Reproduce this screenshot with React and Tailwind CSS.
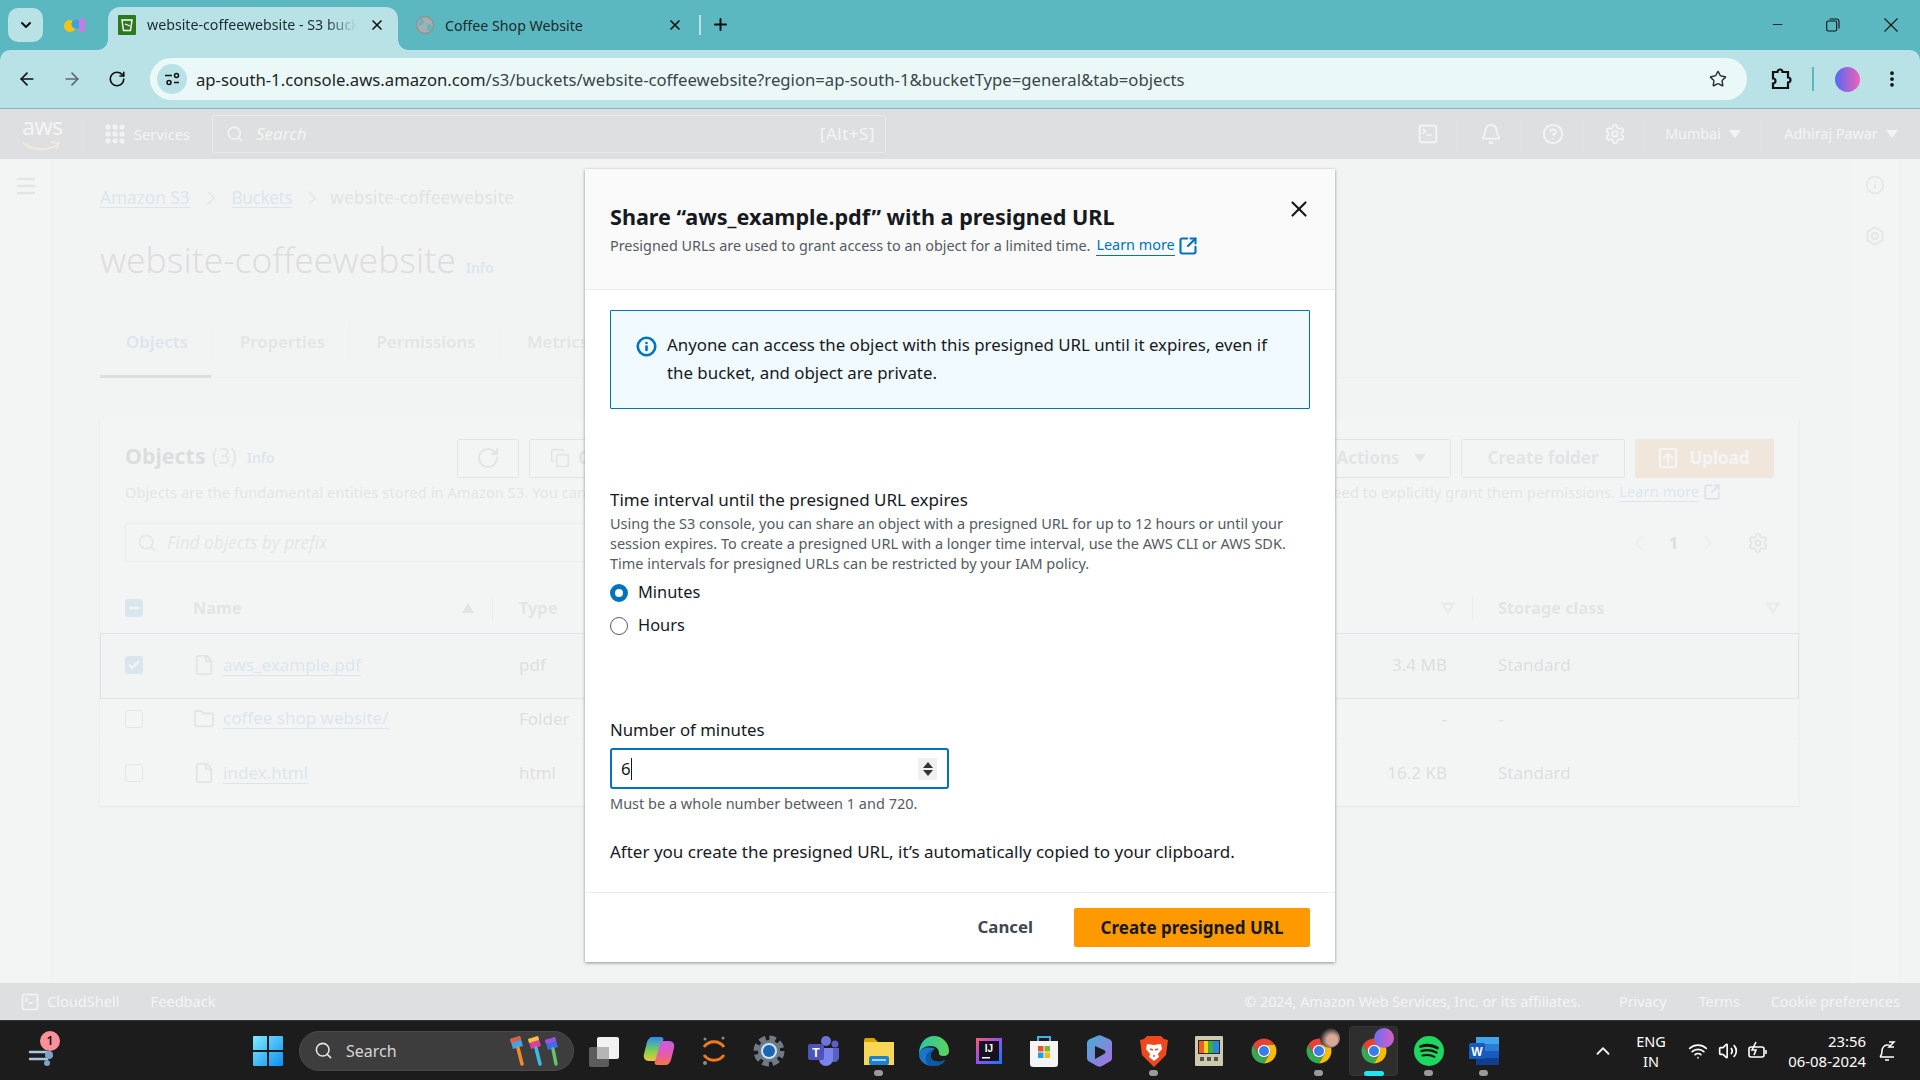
import {
  ArrowLeft, ArrowRight, RotateCw, Star, X, Plus, ChevronDown, ChevronUp, Minus, EllipsisVertical, Search,
  Grip, SquareTerminal, Bell, CircleHelp, Settings, Info, SquareArrowOutUpRight, File, Folder,
  Copy, ChevronLeft, ChevronRight, Menu, Check, Wifi, Volume2,
} from 'lucide-react';

function Caret({ className = 'text-white' }) {
  return <span className={`inline-block w-0 h-0 border-x-[6px] border-x-transparent border-t-[8px] border-t-current ${className}`} />;
}

function FilterCaret() {
  return (
    <svg width="14" height="12" viewBox="0 0 14 12" className="text-[#879596]">
      <path d="M1.5 1.5h11L7 10.5z" fill="none" stroke="currentColor" strokeWidth="2" />
    </svg>
  );
}

function ChromeLogo({ size = 30 }) {
  return (
    <svg width={size} height={size} viewBox="0 0 48 48">
      <path d="M41.32 14H24a10 10 0 0 0-8.66 15L6.68 14a20 20 0 0 1 34.64 0z" fill="#e94235" />
      <path d="M6.68 14l8.66 15a10 10 0 0 0 17.32 0L24 44A20 20 0 0 1 6.68 14z" fill="#34a853" />
      <path d="M24 14h17.32A20 20 0 0 1 24 44l8.66-15A10 10 0 0 0 24 14z" fill="#fbbc04" />
      <circle cx="24" cy="24" r="10" fill="#fff" />
      <circle cx="24" cy="24" r="8" fill="#3a7cec" />
    </svg>
  );
}

function TabStrip() {
  return (
    <div className="h-[50px] flex items-end relative shrink-0">
      <div className="absolute left-[8px] top-[8px] w-[35px] h-[34px] rounded-[10px] bg-[#b8e2e5] flex items-center justify-center">
        <ChevronDown size={16} strokeWidth={3} className="text-[#111]" />
      </div>
      <svg width="22" height="18" viewBox="0 0 22 18" className="absolute left-[64px] top-[16px]">
        <circle cx="6" cy="10" r="6" fill="#f2c417" />
        <circle cx="12" cy="8" r="4.5" fill="#38a4dc" />
        <rect x="15" y="2" width="6" height="14" rx="2" fill="#c77ae8" />
      </svg>
      {/* active tab */}
      <div className="absolute left-[108px] top-[7px] w-[290px] h-[43px] bg-[#b8e2e5] rounded-t-[12px] flex items-center pl-[10px] pb-[7px]">
        <span className="absolute left-[-10px] bottom-0 w-[10px] h-[10px] bg-[radial-gradient(circle_at_0_0,transparent_9.5px,#b8e2e5_10px)]" />
        <span className="absolute right-[-10px] bottom-0 w-[10px] h-[10px] bg-[radial-gradient(circle_at_100%_0,transparent_9.5px,#b8e2e5_10px)]" />
        <svg width="18" height="20" viewBox="0 0 18 20">
          <rect width="18" height="20" rx="1" fill="#2c7a1f" />
          <path d="M4 5h10l-1.5 10.5h-7z" fill="none" stroke="#fff" strokeWidth="1.4" />
          <path d="M7 9l5 2" stroke="#fff" strokeWidth="1.2" />
        </svg>
        <span className="ml-[11px] w-[210px] overflow-hidden whitespace-nowrap text-[14.2px] text-[#1c2b2d] [mask-image:linear-gradient(to_right,black_85%,transparent)]">website-coffeewebsite - S3 bucket</span>
        <X size={16} strokeWidth={2.5} className="ml-[12px] text-[#111]" />
      </div>
      {/* inactive tab */}
      <svg width="20" height="20" viewBox="0 0 20 20" className="absolute left-[415px] top-[15px]">
        <circle cx="10" cy="10" r="8.5" fill="#a8adb0" stroke="#8d9396" strokeWidth="1.5" />
        <path d="M6 3c3 2 4 4 2 6s-4 1-5 3M13 9c2 0 4 1 4 3-1 3-4 4-5 4 0-3 0-5 1-7z" fill="#5bb8c1" />
      </svg>
      <span className="absolute left-[445px] top-[15px] text-[14.2px] text-[#1c2b2d]">Coffee Shop Website</span>
      <X size={16} strokeWidth={2.5} className="absolute left-[667px] top-[17px] text-[#111]" />
      <div className="absolute left-[699px] top-[15px] w-[2px] h-[20px] bg-[#b8e2e5]" />
      <Plus size={19} strokeWidth={2.5} className="absolute left-[711px] top-[15px] text-[#111]" />
      {/* window controls */}
      <Minus size={15} strokeWidth={1.3} className="absolute left-[1770px] top-[17px] text-[#111]" />
      <svg width="14" height="14" viewBox="0 0 14 14" className="absolute left-[1826px] top-[18px]" fill="none" stroke="#111" strokeWidth="1.1">
        <rect x="0.7" y="3" width="10" height="10" rx="1.6" />
        <path d="M3.5 1h7a2.5 2.5 0 0 1 2.5 2.5v7" />
      </svg>
      <svg width="14" height="14" viewBox="0 0 14 14" className="absolute left-[1884px] top-[18px]" stroke="#111" strokeWidth="1.1">
        <path d="M0.5 0.5l13 13M13.5 0.5l-13 13" />
      </svg>
    </div>
  );
}

function Toolbar() {
  return (
    <div className="h-[59px] bg-[#b8e2e5] rounded-t-[10px] border-b border-[#88b4b8] flex items-center shrink-0 relative">
      <div className="w-[150px] flex items-center pl-[17px] gap-[25px]">
        <ArrowLeft size={20} strokeWidth={2} className="text-[#111]" />
        <ArrowRight size={20} strokeWidth={2} className="text-[#5c6b6e]" />
        <RotateCw size={18} strokeWidth={2.2} className="ml-[1px] text-[#111]" />
      </div>
      <div className="w-[1597px] h-[42px] rounded-full bg-[#ebf8f8] flex items-center pl-[7px] relative">
        <div className="w-[30px] h-[30px] rounded-full bg-[#b8e2e5] flex items-center justify-center">
          <svg width="16" height="16" viewBox="0 0 16 16" fill="none" stroke="#111" strokeWidth="1.5">
            <path d="M1 4.5h7M10 11.500h5" />
            <circle cx="12.500" cy="4.500" r="2" />
            <circle cx="5" cy="11.500" r="2" />
          </svg>
        </div>
        <span className="ml-[9px] mt-[1px] text-[16.7px] text-[#1c2526] whitespace-nowrap">ap-south-1.console.aws.amazon.com<span className="text-[#38474a]">/s3/buckets/website-coffeewebsite?region=ap-south-1&amp;bucketType=general&amp;tab=objects</span></span>
        <Star size={18} strokeWidth={2} className="absolute right-[20px] text-[#2d3436]" />
      </div>
      <svg width="22" height="24" viewBox="0 0 22 24" fill="none" stroke="#111" strokeWidth="2.2" className="ml-[23px]">
        <path d="M3 5h4.5a2.5 2.5 0 0 1 5 0H18v5.5a2.5 2.5 0 0 1 0 5V21H3v-4.5a2.5 2.5 0 0 0 0-5z" />
      </svg>
      <div className="w-[2px] h-[24px] bg-[#5bb8c1] ml-[20px]" />
      <div className="w-[25px] h-[25px] rounded-full ml-[21px] bg-[linear-gradient(to_right,#4f6bf0,#f560b8)]" />
      <EllipsisVertical size={20} strokeWidth={2.5} className="ml-[22px] text-[#111]" />
    </div>
  );
}

function NavCell({ w, children, last }) {
  return <div className={`h-[36px] flex items-center justify-center gap-[8px] ${w} ${last ? '' : 'border-r border-[#414750]'}`}>{children}</div>;
}

function TopNav() {
  return (
    <div className="h-[50px] bg-[#232f3e] flex items-center text-white shrink-0">
      <div className="w-[83px] h-[36px] border-r border-[#414750] pl-[22px] relative">
        <span className="absolute left-[22px] top-[-4px] text-[23px] leading-[28px] tracking-[-0.5px]">aws</span>
        <svg width="40" height="12" viewBox="0 0 40 12" className="absolute left-[21px] top-[25px]">
          <path d="M2 2c10 8 24 8 34 2" fill="none" stroke="#f90" strokeWidth="2" />
          <path d="M30 1l8 1-3 6" fill="none" stroke="#f90" strokeWidth="2" />
        </svg>
      </div>
      <Grip size={24} strokeWidth={3} className="ml-[20px]" />
      <span className="ml-[7px] w-[78px] text-[14.7px]">Services</span>
      <div className="w-[674px] h-[38px] border border-[#879596] rounded-[2px] bg-[#232f3e] flex items-center pl-[13px] pr-[10px]">
        <Search size={18} strokeWidth={2} />
        <span className="ml-[12px] italic text-[17px] flex-1">Search</span>
        <span className="text-[17px] tracking-[0.5px]">[Alt+S]</span>
      </div>
      <div className="flex-1" />
      <NavCell w="w-[62px]"><SquareTerminal size={22} strokeWidth={2} className="ml-[2px]" /></NavCell>
      <NavCell w="w-[64px]"><Bell size={22} strokeWidth={2} className="ml-[2px]" /></NavCell>
      <NavCell w="w-[61px]"><CircleHelp size={22} strokeWidth={2} className="ml-[2px]" /></NavCell>
      <NavCell w="w-[62px]"><Settings size={22} strokeWidth={2} className="ml-[2px]" /></NavCell>
      <NavCell w="w-[117px]"><span className="text-[14.3px]">Mumbai</span><Caret /></NavCell>
      <NavCell w="w-[158px]" last><span className="text-[14.3px]">Adhiraj Pawar</span><Caret /></NavCell>
    </div>
  );
}

function Breadcrumb() {
  return (
    <div className="h-[22px] flex items-center text-[17.200px] leading-[22px] mt-[1px]">
      <a className="text-[#0073bb] border-b border-[#0073bb] leading-[19px]">Amazon S3</a>
      <ChevronRight size={24} strokeWidth={1.5} className="mx-[9px] text-[#687078]" />
      <a className="text-[#0073bb] border-b border-[#0073bb] leading-[19px] tracking-[-0.4px]">Buckets</a>
      <ChevronRight size={24} strokeWidth={1.5} className="ml-[8px] mr-[6px] text-[#687078]" />
      <span className="text-[#545b64] font-medium">website-coffeewebsite</span>
    </div>
  );
}

function Tabs() {
  const items = [['Properties', 'w-[137px]'], ['Permissions', 'w-[150px]']];
  return (
    <div className="mt-[37px] h-[60px] border-b border-[#d5dbdb] flex items-start pt-[4px] relative">
      <div className="w-[113px] h-[40px] pl-[2px] border-r border-[#d5dbdb] flex items-center justify-center text-[16.800px] font-semibold text-[#0073bb]">Objects</div>
      <span className="absolute left-0 bottom-[-1px] w-[111px] h-[3px] bg-[#16191f]" />
      {items.map(([t, w]) => (
        <div key={t} className={`h-[40px] pl-[3px] border-r border-[#d5dbdb] flex items-center justify-center text-[16.800px] font-semibold text-[#545b64] ${w}`}>{t}</div>
      ))}
      <div className="h-[40px] pl-[27px] pr-[26px] border-r border-[#d5dbdb] flex items-center text-[16.800px] font-semibold text-[#545b64]">Metrics</div>
    </div>
  );
}

function SquareBtn({ children, className = '' }) {
  return <div className={`h-[39px] border border-[#545b64] rounded-[2px] flex items-center justify-center font-bold text-[17px] leading-[22px] pb-[2px] text-[#545b64] ${className}`}>{children}</div>;
}

function Check18({ state }) {
  if (state === 'checked') return <div className="w-[18px] h-[18px] rounded-[3px] bg-[#0073bb] flex items-center justify-center"><Check size={14} strokeWidth={3.5} className="text-white" /></div>;
  if (state === 'mixed') return <div className="w-[18px] h-[18px] rounded-[3px] bg-[#0073bb] flex items-center justify-center"><Minus size={14} strokeWidth={4} className="text-white" /></div>;
  return <div className="w-[18px] h-[18px] rounded-[3px] border border-[#687078]" />;
}

function ObjectRow({ state, icon, name, type, size, storage, className }) {
  const RowIcon = icon;
  return (
    <div className={`grid grid-cols-[93px_326px_1fr_301px] items-center text-[17px] text-[#16191f] ${className}`}>
      <div className="pl-[25px]"><Check18 state={state} /></div>
      <div className="flex items-center gap-[8px]">
        <RowIcon size={22} strokeWidth={2} className="text-[#545b64]" />
        <a className="text-[#0073bb] border-b border-[#0073bb] leading-[20px]">{name}</a>
      </div>
      <div className="flex justify-between pr-[51px]">
        <span>{type}</span>
        <span>{size}</span>
      </div>
      <div>{storage}</div>
    </div>
  );
}

function ObjectsCard() {
  return (
    <div className="mt-[42px] h-[386px] bg-white shadow-[0_1px_1px_0_rgba(0,28,36,0.3),1px_1px_1px_0_rgba(0,28,36,0.15),-1px_1px_1px_0_rgba(0,28,36,0.15)]">
      <div className="pt-[19px] px-[25px] flex h-[58px]">
        <div className="w-[332px] flex items-center pb-[5px]">
          <span className="text-[21.400px] font-bold text-[#16191f]">Objects</span>
          <span className="ml-[6px] text-[21.400px] text-[#687078]">(3)</span>
          <span className="ml-[10px] mt-[3px] text-[14px] font-semibold text-[#0073bb]">Info</span>
        </div>
        <SquareBtn className="w-[62px]"><RotateCw size={24} strokeWidth={2} /></SquareBtn>
        <SquareBtn className="w-[200px] ml-[10px] justify-start pl-[20px] gap-[8px]"><Copy size={20} strokeWidth={2} />Copy S3 URI</SquareBtn>
        <div className="flex-1" />
        <SquareBtn className="w-[150px] gap-[14px] pl-[10px]">Actions <Caret className="text-[#545b64]" /></SquareBtn>
        <SquareBtn className="w-[164px] ml-[10px] border-[#545b64]">Create folder</SquareBtn>
        <div className="w-[139px] h-[39px] ml-[10px] rounded-[2px] bg-[#ec7211] flex items-center justify-center gap-[12px] font-bold text-[17px] leading-[22px] pb-[2px] text-white">
          <svg width="18" height="20" viewBox="0 0 18 20" fill="none" stroke="#fff" strokeWidth="2"><rect x="1" y="1" width="16" height="18" /><path d="M9 17V6M4.5 10.5L9 6l4.5 4.5" /></svg>
          Upload
        </div>
      </div>
      <p className="mt-[3px] px-[25px] text-[14.500px] tracking-[0.13px] leading-[20px] text-[#545b64] whitespace-nowrap flex items-center">
        Objects are the fundamental entities stored in Amazon S3. You can use Amazon S3 inventory to get a list of all objects in your bucket. For others to access your objects, you'll need to explicitly grant them permissions.
        <a className="ml-[4px] text-[#0073bb] border-b border-[#0073bb]">Learn more</a>
        <SquareArrowOutUpRight size={18} strokeWidth={2.5} className="ml-[4px] text-[#0073bb]" />
      </p>
      <div className="mt-[21px] px-[25px] flex items-center">
        <div className="w-[700px] h-[39px] border border-[#aab7b8] rounded-[2px] flex items-center pl-[11px] italic text-[17.200px] text-[#687078] gap-[10px]">
          <Search size={20} strokeWidth={2} className="text-[#687078]" />Find objects by prefix
        </div>
        <div className="flex-1" />
        <ChevronLeft size={26} strokeWidth={1.6} className="text-[#aab7b8]" />
        <span className="ml-[17px] w-[9px] font-bold text-[16px] text-[#16191f]">1</span>
        <ChevronRight size={26} strokeWidth={1.6} className="ml-[17px] text-[#aab7b8]" />
        <Settings size={22} strokeWidth={2} className="ml-[26px] mr-[5px] text-[#545b64]" />
      </div>
      <div className="mt-[22px] h-[48px] grid grid-cols-[93px_326px_1fr_301px] items-center font-bold text-[16.300px] text-[#545b64]">
        <div className="pl-[25px]"><Check18 state="mixed" /></div>
        <div className="flex items-center justify-between pr-[26px]">
          Name
          <span className="flex items-center gap-[18px]">
            <span className="w-0 h-0 border-x-[6px] border-x-transparent border-b-[10px] border-b-[#545b64]" />
            <span className="w-px h-[25px] bg-[#aab7b8]" />
          </span>
        </div>
        <div className="flex items-center justify-between pr-[25px]">
          Type
          <span className="flex items-center gap-[17px]"><FilterCaret /><span className="w-px h-[25px] bg-[#aab7b8]" /></span>
        </div>
        <div className="flex items-center justify-between pr-[19px]">Storage class<FilterCaret /></div>
      </div>
      <ObjectRow className="h-[66px] mt-[1px] pb-[2px] bg-[#f1faff] outline outline-[#0073bb] -outline-offset-1" state="checked" icon={File} name="aws_example.pdf" type="pdf" size="3.4 MB" storage="Standard" />
      <ObjectRow className="h-[40px] border-b border-[#eaeded]" icon={Folder} name="coffee shop website/" type="Folder" size="-" storage="-" />
      <ObjectRow className="h-[68px]" icon={File} name="index.html" type="html" size="16.2 KB" storage="Standard" />
    </div>
  );
}

function Page() {
  return (
    <div className="flex-1 bg-[#f2f3f3] flex min-h-0">
      <div className="w-[52px] border-r border-[#d5dbdb] bg-white pt-[15px] flex justify-center">
        <Menu size={24} strokeWidth={2.4} className="text-[#545b64]" />
      </div>
      <div className="flex-1 min-w-0 pl-[48px] pr-[50px] pt-[27px]">
        <Breadcrumb />
        <div className="mt-[28px] h-[44px] flex items-baseline">
          <h1 className="text-[35.400px] leading-[44px] font-light text-[#16191f]">website-coffeewebsite</h1>
          <span className="ml-[10px] text-[14px] font-semibold text-[#0073bb]">Info</span>
        </div>
        <Tabs />
        <ObjectsCard />
      </div>
      <div className="w-[51px] border-x border-[#d5dbdb] bg-white pt-[16px] flex flex-col items-center gap-[31px]">
        <Info size={20} strokeWidth={2} className="text-[#687078]" />
        <svg width="20" height="20" viewBox="0 0 20 20" fill="none" stroke="#687078" strokeWidth="2">
          <path d="M10 1.5l7.5 4.2v8.6L10 18.5l-7.5-4.2V5.700z" />
          <circle cx="10" cy="10" r="3" />
        </svg>
      </div>
      <div className="w-[20px]" />
    </div>
  );
}

function Footer() {
  return (
    <div className="h-[37px] bg-[#232f3e] flex items-center text-white text-[14.300px] shrink-0">
      <SquareTerminal size={20} strokeWidth={2} className="ml-[20px]" />
      <span className="ml-[7px] text-[14.600px]">CloudShell</span>
      <span className="ml-[31px] text-[14.600px]">Feedback</span>
      <div className="flex-1" />
      <span>© 2024, Amazon Web Services, Inc. or its affiliates.</span>
      <span className="ml-[38px]">Privacy</span>
      <span className="ml-[32px]">Terms</span>
      <span className="ml-[31px] mr-[20px]">Cookie preferences</span>
    </div>
  );
}

function Radio({ checked, label }) {
  return (
    <div className="h-[33px] flex items-center gap-[10px] text-[16.400px] text-[#16191f]">
      <span className={`w-[18px] h-[18px] rounded-full bg-white ${checked ? 'border-[5px] border-[#0073bb]' : 'border-[1.5px] border-[#545b64]'}`} />
      {label}
    </div>
  );
}

function PresignModal() {
  return (
    <div className="absolute left-[585px] top-[60px] w-[750px] h-[793px] bg-white flex flex-col shadow-[0_1px_3px_rgba(0,28,36,0.45)]">
      <div className="h-[121px] bg-[#fafafa] border-b border-[#eaeded] px-[25px] pt-[34px] shrink-0 relative">
        <h2 className="text-[21.600px] leading-[28px] font-bold text-[#16191f]">Share “aws_example.pdf” with a presigned URL</h2>
        <p className="mt-[4px] text-[14.400px] leading-[20px] text-[#545b64] flex items-center">
          Presigned URLs are used to grant access to an object for a limited time.
          <a className="ml-[6px] text-[#0073bb] border-b border-[#0073bb]">Learn more</a>
          <SquareArrowOutUpRight size={20} strokeWidth={2.5} className="ml-[3px] text-[#0073bb]" />
        </p>
        <X size={26} strokeWidth={2} className="absolute right-[23px] top-[27px] text-[#16191f]" />
      </div>
      <div className="flex-1 px-[25px] pt-[20px] flex flex-col">
        <div className="h-[99px] border border-[#0073bb] bg-[#f1faff] rounded-[1px] flex pl-[25px] pr-[24px] pt-[20px] gap-[10px] shrink-0">
          <Info size={21} strokeWidth={3} className="mt-[5px] text-[#0073bb] shrink-0" />
          <p className="text-[16.850px] leading-[28px] text-[#16191f]">Anyone can access the object with this presigned URL until it expires, even if the bucket, and object are private.</p>
        </div>
        <label className="mt-[80px] text-[17px] leading-[22px] text-[#16191f]">Time interval until the presigned URL expires</label>
        <p className="mt-[2px] text-[14.500px] leading-[20px] text-[#545b64]">
          Using the S3 console, you can share an object with a presigned URL for up to 12 hours or until your session expires. To create a presigned URL with a longer time interval, use the AWS CLI or AWS SDK. Time intervals for presigned URLs can be restricted by your IAM policy.
        </p>
        <div className="mt-[3px]">
          <Radio checked label="Minutes" />
          <Radio label="Hours" />
        </div>
        <label className="mt-[77px] text-[16.800px] leading-[22px] text-[#16191f]">Number of minutes</label>
        <div className="mt-[7px] w-[339px] h-[41px] border-2 border-[#0073bb] rounded-[3px] flex items-center pl-[9px] pr-[10px] text-[16.800px] text-[#16191f]">
          6<span className="w-px h-[22px] bg-[#16191f]" />
          <div className="flex-1" />
          <div className="w-[19px] h-[22px] bg-[#f0f0f0] flex flex-col items-center justify-center gap-[2px]">
            <span className="w-0 h-0 border-x-[5px] border-x-transparent border-b-[6px] border-b-[#333]" />
            <span className="w-0 h-0 border-x-[5px] border-x-transparent border-t-[6px] border-t-[#333]" />
          </div>
        </div>
        <p className="mt-[4px] text-[14.500px] leading-[20px] text-[#545b64]">Must be a whole number between 1 and 720.</p>
        <p className="mt-[27px] text-[17px] leading-[24px] text-[#16191f]">After you create the presigned URL, it’s automatically copied to your clipboard.</p>
      </div>
      <div className="h-[70px] border-t border-[#eaeded] px-[25px] pt-[15px] flex justify-end items-start shrink-0">
        <span className="mt-[7px] font-bold text-[16.800px] leading-[24px] text-[#414750]">Cancel</span>
        <div className="ml-[41px] w-[236px] h-[39px] rounded-[2px] bg-[#ff9900] flex items-center justify-center font-bold text-[17px] text-[#16191f]">Create presigned URL</div>
      </div>
    </div>
  );
}

function Slot({ children, dot, active }) {
  return (
    <div className="w-[55px] h-[60px] relative flex items-center justify-center shrink-0">
      {active && <span className="absolute left-[3px] top-[5px] w-[49px] h-[50px] rounded-[4px] bg-[#2e2e2e] border border-[#363636]" />}
      <span className="relative flex">{children}</span>
      {dot && <span className="absolute bottom-[5px] left-[23px] w-[9px] h-[6px] rounded-full bg-[#9a9a9a]" />}
      {active && <span className="absolute bottom-[5px] left-[18px] w-[20px] h-[5px] rounded-full bg-[#1fe6f2]" />}
    </div>
  );
}

function Taskbar() {
  return (
    <div className="h-[60px] bg-[#1c1c1c] border-t border-[#333] flex items-center text-white shrink-0 relative">
      {/* weather widget */}
      <div className="w-[240px] h-full relative">
        <svg width="32" height="30" viewBox="0 0 32 30" className="absolute left-[27px] top-[18px]" fill="none" stroke="#a6c5de" strokeWidth="2.6" strokeLinecap="round">
          <path d="M3 13h17M3 20h17" />
          <circle cx="22" cy="16" r="4" fill="#7ea3c4" stroke="none" />
          <circle cx="20" cy="8" r="3" fill="#a6c5de" stroke="none" />
          <circle cx="20" cy="24" r="3" fill="#7ea3c4" stroke="none" />
        </svg>
        <span className="absolute left-[40px] top-[10px] w-[20px] h-[20px] rounded-full bg-[#ff8f9a] text-[#111] text-[12px] leading-[20px] text-center font-semibold">1</span>
      </div>
      <Slot>
        <svg width="30" height="30" viewBox="0 0 30 30">
          <defs><linearGradient id="w" x1="0" y1="0" x2="1" y2="1"><stop offset="0" stopColor="#7fe9ff" /><stop offset="1" stopColor="#0f8ff0" /></linearGradient></defs>
          <path d="M0 1a1 1 0 0 1 1-1h13v14H0zM16 0h13a1 1 0 0 1 1 1v13H16zM0 16h14v14H1a1 1 0 0 1-1-1zM16 16h14v13a1 1 0 0 1-1 1H16z" fill="url(#w)" />
        </svg>
      </Slot>
      <div className="ml-[4px] w-[275px] h-[40px] rounded-full bg-[#3d3d3d] border border-[#4a4a4a] flex items-center pl-[14px] relative shrink-0">
        <Search size={19} strokeWidth={2} className="text-[#e5e5e5]" />
        <span className="ml-[13px] text-[16px] text-[#d6d6d6]">Search</span>
        <svg width="54" height="32" viewBox="0 0 54 32" className="absolute right-[11px] top-[3px]">
          <g strokeLinecap="round">
            <path d="M2 4l10-3 3 10-10 3z" fill="#3ea6e8" /><path d="M2 4l10-3 1 4-10 3z" fill="#e85b3e" /><path d="M10 13l4 16" stroke="#f28a2e" strokeWidth="3.500" />
            <path d="M20 4l10-3 3 10-10 3z" fill="#d93f9b" /><path d="M20 4l10-3 1 4-10 3z" fill="#f5c33e" /><path d="M28 13l4 16" stroke="#42b8e8" strokeWidth="3.500" />
            <path d="M37 5l10-3 3 10-10 3z" fill="#3e6de8" /><path d="M37 5l10-3 1 4-10 3z" fill="#a24fe0" /><path d="M45 14l3 15" stroke="#64c46a" strokeWidth="3.500" />
          </g>
        </svg>
      </div>
      <div className="ml-[2px] flex">
        <Slot>
          <svg width="30" height="32" viewBox="0 0 30 32"><rect x="0" y="12" width="20" height="20" rx="2" fill="#5c5c5c" /><rect x="8" y="2" width="22" height="22" rx="2" fill="#f2f2f2" /><rect x="8" y="12" width="12" height="12" fill="#b5b5b5" /></svg>
        </Slot>
        <Slot>
          <svg width="32" height="32" viewBox="0 0 32 32">
            <defs>
              <linearGradient id="c1" x1="0" y1="0" x2="0" y2="1"><stop offset="0" stopColor="#2a8cf0" /><stop offset="0.6" stopColor="#7fd44a" /><stop offset="1" stopColor="#f5c33e" /></linearGradient>
              <linearGradient id="c2" x1="0" y1="0" x2="0" y2="1"><stop offset="0" stopColor="#c65be8" /><stop offset="0.6" stopColor="#e85ba8" /><stop offset="1" stopColor="#f5783e" /></linearGradient>
            </defs>
            <path d="M9 2h9c2 0 3 2 2 4l-6 20H6c-4 0-6-3-5-7l3-12C5 4 7 2 9 2z" fill="url(#c1)" />
            <path d="M23 30h-9c-2 0-3-2-2-4l6-20h8c4 0 6 3 5 7l-3 12c-1 3-3 5-5 5z" fill="url(#c2)" />
          </svg>
        </Slot>
        <Slot>
          <svg width="28" height="30" viewBox="0 0 28 30" fill="none">
            <path d="M4 11c5-7 15-7 20 0M4 19c5 7 15 7 20 0" stroke="#f0791f" strokeWidth="3" />
            <circle cx="5" cy="3" r="1.5" fill="#8a8a8a" /><circle cx="23" cy="2" r="1.5" fill="#8a8a8a" /><circle cx="5" cy="27" r="2" fill="#8a8a8a" />
          </svg>
        </Slot>
        <Slot>
          <svg width="32" height="32" viewBox="0 0 32 32">
            <circle cx="16" cy="16" r="11" fill="#6f7a85" />
            <circle cx="16" cy="16" r="13" fill="none" stroke="#6f7a85" strokeWidth="5" strokeDasharray="6.5 3.7" />
            <circle cx="16" cy="16" r="8" fill="#cfe2f3" /><circle cx="16" cy="16" r="6" fill="#1b65b5" />
          </svg>
        </Slot>
        <Slot>
          <svg width="32" height="30" viewBox="0 0 32 30">
            <circle cx="18" cy="5" r="5" fill="#6f74d8" /><circle cx="27" cy="8" r="3.500" fill="#5a5fc4" />
            <path d="M22 12h9v9c0 3-2 5-5 5h-4z" fill="#5a5fc4" /><path d="M10 12h15v11a7 7 0 0 1-14 0z" fill="#7b83eb" />
            <rect x="0" y="8" width="16" height="16" rx="2" fill="#4b53bc" />
            <text x="8" y="20.500" textAnchor="middle" fill="#fff" fontSize="12" fontWeight="700" fontFamily="Liberation Sans">T</text>
          </svg>
        </Slot>
        <Slot dot>
          <svg width="30" height="28" viewBox="0 0 30 28">
            <path d="M0 3a2 2 0 0 1 2-2h8l4 4H0z" fill="#d9a400" /><rect x="0" y="5" width="30" height="23" fill="#f7d754" />
            <rect x="5" y="19" width="20" height="9" rx="2" fill="#1f7fd0" /><rect x="8" y="22" width="14" height="2" fill="#9fd0f5" />
          </svg>
        </Slot>
        <Slot>
          <svg width="30" height="30" viewBox="0 0 30 30">
            <defs>
              <linearGradient id="e1" x1="0" y1="0" x2="1" y2="0"><stop offset="0" stopColor="#27c6a8" /><stop offset="1" stopColor="#5dd35a" /></linearGradient>
            </defs>
            <path d="M15 0a15 15 0 0 1 15 15c0 3-2 5-6 5-3 0-4-1-4-3 0-4-3-7-8-7-4 0-10 1-12 8C0 8 6 0 15 0z" fill="url(#e1)" />
            <path d="M0 18C0 26 7 30 14 30c6 0 10-2 12-6-6 3-12 2-14-2-1-3 0-7 4-9-6-3-16-1-16 5z" fill="#1b76c9" />
            <path d="M14 30c-6 0-8-5-7-10 1-3 4-6 9-7-4 2-5 6-4 9 2 4 8 5 14 2-2 4-6 6-12 6z" fill="#0c59a4" />
          </svg>
        </Slot>
        <Slot>
          <svg width="26" height="26" viewBox="0 0 26 26">
            <defs><linearGradient id="ij" x1="0" y1="0" x2="1" y2="1"><stop offset="0" stopColor="#fd5b6a" /><stop offset="0.4" stopColor="#a84fe0" /><stop offset="1" stopColor="#087cfa" /></linearGradient></defs>
            <rect width="26" height="26" fill="url(#ij)" /><rect x="3" y="3" width="20" height="20" fill="#16101f" />
            <text x="13" y="14" textAnchor="middle" fill="#fff" fontSize="10" fontWeight="700" fontFamily="Liberation Sans">IJ</text>
            <rect x="6" y="19" width="8" height="1.500" fill="#fff" />
          </svg>
        </Slot>
        <Slot>
          <svg width="30" height="32" viewBox="0 0 30 32">
            <path d="M9 6V2h12v4" fill="none" stroke="#3fb4ea" strokeWidth="2" />
            <path d="M1 6h28v23a3 3 0 0 1-3 3H4a3 3 0 0 1-3-3z" fill="#f5f5f5" />
            <rect x="9" y="11" width="5.500" height="5.500" fill="#e8532b" /><rect x="15.500" y="11" width="5.500" height="5.500" fill="#7fba2a" />
            <rect x="9" y="17.500" width="5.500" height="5.500" fill="#1ea1e8" /><rect x="15.500" y="17.500" width="5.500" height="5.500" fill="#f5b81e" />
          </svg>
        </Slot>
        <Slot>
          <svg width="28" height="32" viewBox="0 0 28 32">
            <defs><linearGradient id="bi" x1="0" y1="0" x2="1" y2="1"><stop offset="0" stopColor="#3fb0d8" /><stop offset="1" stopColor="#b06be0" /></linearGradient></defs>
            <path d="M2 8c0-2 1-3 3-4l7-3c2-1 3-1 5 0l7 3c2 1 3 2 3 4v15c0 2-1 3-3 4l-7 4c-2 1-3 1-5 0l-7-4c-2-1-3-2-3-4z" fill="url(#bi)" />
            <path d="M10 11l9 4c2 1 2 3 0 4l-9 5z" fill="#1c1c1c" />
          </svg>
        </Slot>
        <Slot dot>
          <svg width="28" height="32" viewBox="0 0 28 32">
            <path d="M7 1h14l3 3 4 1-2 15-12 12L2 20 0 5l4-1z" fill="#f1471d" />
            <path d="M7 9l7 1 7-1 1 5-4 5 1 3-5 4-5-4 1-3-4-5z" fill="#fff" />
            <path d="M10 14l3 1M18 14l-3 1M13 21h2" stroke="#f1471d" strokeWidth="1.500" />
          </svg>
        </Slot>
        <Slot>
          <svg width="28" height="30" viewBox="0 0 28 30">
            <rect width="28" height="30" rx="1" fill="#cfc9b0" />
            <rect x="3" y="4" width="22" height="14" fill="#2a2a2a" />
            <rect x="4" y="5" width="5" height="12" fill="#e8601c" /><rect x="9" y="5" width="4" height="12" fill="#f7d31e" /><rect x="13" y="5" width="5" height="12" fill="#3fae3a" /><rect x="18" y="5" width="6" height="12" fill="#2a88d8" />
            <rect x="5" y="21" width="4" height="4" fill="#555" /><rect x="12" y="21" width="4" height="4" fill="#555" /><rect x="19" y="21" width="4" height="4" fill="#555" />
          </svg>
        </Slot>
        <Slot><ChromeLogo /></Slot>
        <Slot dot>
          <ChromeLogo />
          <span className="absolute left-[16px] top-[-8px] w-[20px] h-[20px] rounded-full bg-[radial-gradient(circle_at_60%_60%,#d8a89a_30%,#26282c_70%)]" />
        </Slot>
        <Slot active>
          <ChromeLogo />
          <span className="absolute left-[15px] top-[-8px] w-[20px] h-[20px] rounded-full bg-[linear-gradient(to_right,#6a6bf0,#d860c8)]" />
        </Slot>
        <Slot dot>
          <svg width="30" height="30" viewBox="0 0 30 30" fill="none" stroke="#111" strokeLinecap="round">
            <circle cx="15" cy="15" r="15" fill="#1ed760" stroke="none" />
            <path d="M6.500 10.500c6-2 12-1.500 17 1.500" strokeWidth="2.800" />
            <path d="M7.500 15c5-1.500 10-1 15 1.500" strokeWidth="2.300" />
            <path d="M8.500 19.500c4-1 8.500-.7 12 1.300" strokeWidth="2" />
          </svg>
        </Slot>
        <Slot dot>
          <svg width="30" height="28" viewBox="0 0 30 28">
            <rect x="7" y="0" width="23" height="7" fill="#41a5ee" /><rect x="7" y="7" width="23" height="7" fill="#2b7cd3" /><rect x="7" y="14" width="23" height="7" fill="#185abd" /><rect x="7" y="21" width="23" height="7" fill="#103f91" />
            <rect x="0" y="6" width="16" height="16" rx="1.500" fill="#185abd" />
            <text x="8" y="18.500" textAnchor="middle" fill="#fff" fontSize="12" fontWeight="700" fontFamily="Liberation Sans">W</text>
          </svg>
        </Slot>
      </div>
      {/* tray */}
      <ChevronUp size={22} strokeWidth={2} className="ml-[81px] text-[#eee]" />
      <div className="ml-[17px] w-[40px] text-center text-[14.500px] leading-[20px]">ENG<br />IN</div>
      <Wifi size={20} strokeWidth={2} className="ml-[17px]" />
      <Volume2 size={20} strokeWidth={2} className="ml-[10px]" />
      <svg width="20" height="20" viewBox="0 0 20 20" fill="none" stroke="#fff" strokeWidth="1.600" className="ml-[10px]">
        <rect x="1" y="6" width="15" height="10" rx="2" /><path d="M18 9v4M8 1L4 9h4l-2 5" />
      </svg>
      <div className="ml-[8px] w-[90px] text-right text-[14.900px] leading-[20px] whitespace-nowrap">23:56<br />06-08-2024</div>
      <svg width="20" height="22" viewBox="0 0 20 22" fill="none" stroke="#fff" strokeWidth="1.500" className="ml-[11px]">
        <path d="M3 17c1-1 2-3 2-6s2-6 5-6 2 0 3 1M17 17H3M8 20h4" /><path d="M12 2h5l-5 5h5" />
      </svg>
    </div>
  );
}

export default function App() {
  return (
    <div className="w-[1920px] h-[1080px] bg-[#5bb8c1] flex flex-col overflow-hidden font-['Noto_Sans',sans-serif]">
      <TabStrip />
      <Toolbar />
      <div className="flex-1 min-h-0 flex flex-col relative">
        <TopNav />
        <Page />
        <Footer />
        <div className="absolute inset-0 bg-[#f2f3f3]/90" />
        <PresignModal />
      </div>
      <Taskbar />
    </div>
  );
}
